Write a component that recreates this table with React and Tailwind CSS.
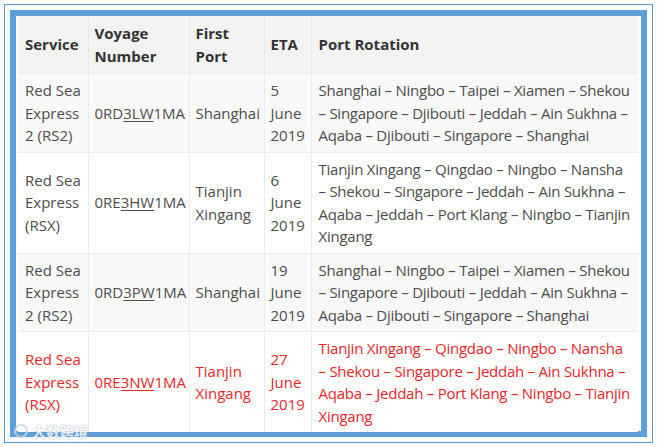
import React from 'react';

// Voyage schedule data
const rows = [
  {
    service: ['Red Sea', 'Express', '2 (RS2)'],
    voyage: ['0RD', '3LW', '1MA'],
    port: ['Shanghai'],
    eta: ['5', 'June', '2019'],
    rotation: [
      'Shanghai – Ningbo – Taipei – Xiamen – Shekou',
      '– Singapore – Djibouti – Jeddah – Ain Sukhna –',
      'Aqaba – Djibouti – Singapore – Shanghai',
    ],
    striped: true,
  },
  {
    service: ['Red Sea', 'Express', '(RSX)'],
    voyage: ['0RE', '3HW', '1MA'],
    port: ['Tianjin', 'Xingang'],
    eta: ['6', 'June', '2019'],
    rotation: [
      'Tianjin Xingang – Qingdao – Ningbo – Nansha',
      '– Shekou – Singapore – Jeddah – Ain Sukhna –',
      'Aqaba – Jeddah – Port Klang – Ningbo – Tianjin',
      'Xingang',
    ],
  },
  {
    service: ['Red Sea', 'Express', '2 (RS2)'],
    voyage: ['0RD', '3PW', '1MA'],
    port: ['Shanghai'],
    eta: ['19', 'June', '2019'],
    rotation: [
      'Shanghai – Ningbo – Taipei – Xiamen – Shekou',
      '– Singapore – Djibouti – Jeddah – Ain Sukhna –',
      'Aqaba – Djibouti – Singapore – Shanghai',
    ],
    striped: true,
  },
  {
    service: ['Red Sea', 'Express', '(RSX)'],
    voyage: ['0RE', '3NW', '1MA'],
    port: ['Tianjin', 'Xingang'],
    eta: ['27', 'June', '2019'],
    rotation: [
      'Tianjin Xingang – Qingdao – Ningbo – Nansha',
      '– Shekou – Singapore – Jeddah – Ain Sukhna –',
      'Aqaba – Jeddah – Port Klang – Ningbo – Tianjin',
      'Xingang',
    ],
    red: true,
  },
];

function Lines({ items }) {
  return items.map((line, i) => (
    <span key={i} className="block whitespace-nowrap">{line}</span>
  ));
}

export default function App() {
  return (
    <div className="w-[659px] h-[447px] bg-white p-[4px] font-['Open_Sans',sans-serif] relative">
      {/* Outer thin frame */}
      <div className="w-[649px] h-[439px] border border-[#5b9bd5] p-[5px]">
        {/* Thick frame */}
        <div className="w-full h-full border-[6px] border-[#5d9fd8] bg-white pl-[2px]">
          <table className="table-fixed border-collapse w-[620px] text-[15px] leading-[22.5px]">
            <colgroup>
              <col className="w-[70px]" />
              <col className="w-[101px]" />
              <col className="w-[75px]" />
              <col className="w-[47px]" />
              <col className="w-[327px]" />
            </colgroup>
            <thead>
              <tr className="bg-[#f3f3f3] text-[#333] font-bold">
                <th className="text-left align-middle px-[7px] py-[6px] border-r border-[#e8e8e8]">Service</th>
                <th className="text-left align-middle px-[6px] py-[6px] border-r border-[#e8e8e8]">Voyage<br />Number</th>
                <th className="text-left align-middle px-[6px] py-[6px] border-r border-[#e8e8e8]">First<br />Port</th>
                <th className="text-left align-middle px-[6px] py-[6px] border-r border-[#e8e8e8]">ETA</th>
                <th className="text-left align-middle px-[7px] py-[6px]">Port Rotation</th>
              </tr>
            </thead>
            <tbody>
              {rows.map((r, i) => (
                <tr
                  key={i}
                  className={`${r.striped ? 'bg-[#f9f9f9]' : 'bg-white'} ${r.red ? 'text-[#e5262d]' : 'text-[#4d4d4d]'} border-t border-[#ececec]`}
                >
                  <td className="align-middle px-[7px] py-[5px] border-r border-[#ececec]">
                    <Lines items={r.service} />
                  </td>
                  <td className="align-middle px-[6px] py-[5px] border-r border-[#ececec] whitespace-nowrap">
                    {r.voyage[0]}
                    <span className="underline underline-offset-[2px]">{r.voyage[1]}</span>
                    {r.voyage[2]}
                  </td>
                  <td className="align-middle px-[6px] py-[5px] border-r border-[#ececec]">
                    <Lines items={r.port} />
                  </td>
                  <td className="align-middle px-[6px] py-[5px] border-r border-[#ececec]">
                    <Lines items={r.eta} />
                  </td>
                  <td className="align-middle px-[7px] py-[5px] tracking-[-0.25px]">
                    <Lines items={r.rotation} />
                  </td>
                </tr>
              ))}
            </tbody>
          </table>
        </div>
      </div>

      {/* Watermark */}
      <div className="absolute left-[14px] top-[424px] flex items-center gap-[4px] opacity-80">
        <span className="w-[14px] h-[14px] rounded-full border-2 border-[#c8d4e0]" />
        <span className="text-[14px] leading-none text-white font-bold font-['Noto_Sans_CJK_SC',sans-serif] [text-shadow:0_0_2px_#7f93aa]">大数跨境</span>
      </div>
    </div>
  );
}
